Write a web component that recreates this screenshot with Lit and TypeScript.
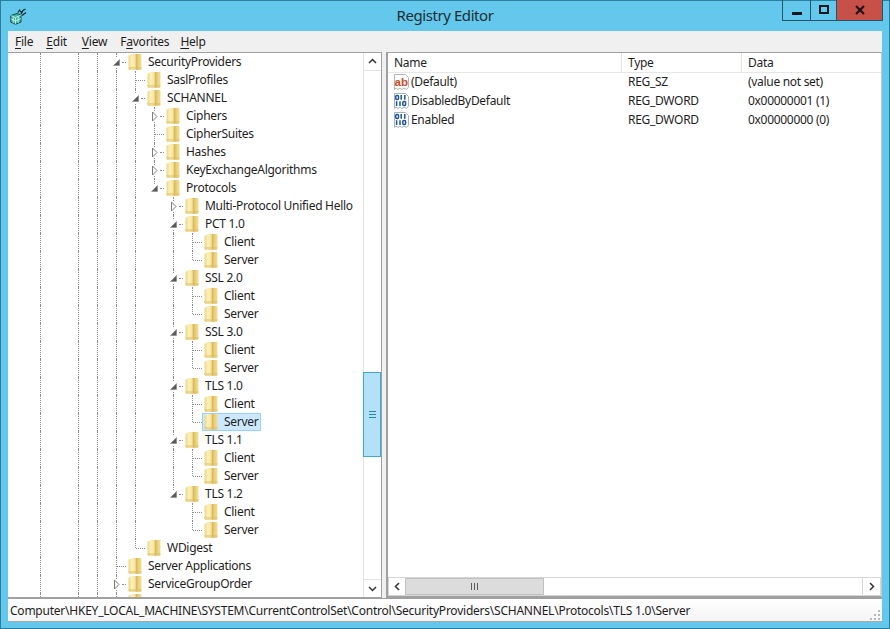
import { LitElement, html, css, svg } from "lit";
import { customElement } from "lit/decorators.js";

type Node = { n: string; open?: boolean; more?: boolean; sel?: boolean; kids?: Node[] };
const pair = (sel = false): Node[] => [{ n: "Client" }, { n: "Server", sel }];
const ver = (n: string, sel = false): Node => ({ n, open: true, kids: pair(sel) });

const roots: Node[] = [
  {
    n: "SecurityProviders", open: true, kids: [
      { n: "SaslProfiles" },
      {
        n: "SCHANNEL", open: true, kids: [
          { n: "Ciphers", more: true },
          { n: "CipherSuites" },
          { n: "Hashes", more: true },
          { n: "KeyExchangeAlgorithms", more: true },
          {
            n: "Protocols", open: true, kids: [
              { n: "Multi-Protocol Unified Hello", more: true },
              ver("PCT 1.0"), ver("SSL 2.0"), ver("SSL 3.0"),
              ver("TLS 1.0", true), ver("TLS 1.1"), ver("TLS 1.2"),
            ],
          },
        ],
      },
      { n: "WDigest" },
    ],
  },
  { n: "Server Applications" },
  { n: "ServiceGroupOrder", more: true },
  { n: "", more: false },
];

type Row = { node: Node; guides: boolean[]; last: boolean };
function flatten(list: Node[], guides: boolean[], out: Row[], openEnd = false) {
  list.forEach((node, i) => {
    const last = i === list.length - 1 && !openEnd;
    out.push({ node, guides, last });
    if (node.kids) flatten(node.kids, [...guides, !last], out);
  });
  return out;
}
const rows = flatten(roots, [false, true, false, true, true], [], true);

const values = [
  { name: "(Default)", type: "REG_SZ", data: "(value not set)", kind: "sz" },
  { name: "DisabledByDefault", type: "REG_DWORD", data: "0x00000001 (1)", kind: "bin" },
  { name: "Enabled", type: "REG_DWORD", data: "0x00000000 (0)", kind: "bin" },
];

const folder = html`<svg class="folder" width="14" height="18" viewBox="0 0 14 18">
  <defs>
    <linearGradient id="fg" x1="0" x2="1" y1="0" y2="0">
      <stop offset="0" stop-color="#ecd582"/><stop offset=".25" stop-color="#fbf1bb"/>
      <stop offset=".5" stop-color="#f7e59c"/><stop offset=".62" stop-color="#d8b85e"/>
      <stop offset=".74" stop-color="#eacd74"/><stop offset="1" stop-color="#f3df92"/>
    </linearGradient>
  </defs>
  <path d="M.5 2.8 L4 1 H13 L13.5 1.8 V15.8 L13 16.8 H1.2 L.5 15.8 Z" fill="url(#fg)"/>
  <path d="M.5 14 H13.5 V15.8 L13 16.8 H1.2 L.5 15.8 Z" fill="#d9bb62" opacity=".45"/>
</svg>`;

const openArrow = html`<svg class="arr" width="9" height="9" viewBox="0 0 9 9"><path d="M7.5 1.5 V7.5 H1.5 Z" fill="#5a5a5a" stroke="#8a8a8a" stroke-width=".6"/></svg>`;
const closedArrow = html`<svg class="arr" width="9" height="11" viewBox="0 0 9 11"><path d="M2.5 1 L7 5.5 L2.5 10 Z" fill="#fff" stroke="#7d7d7d"/></svg>`;

const page = (c: string) => svg`<path d="M1.5 .5 H12.5 L15.5 3.5 V13 L13.5 15.5 L11 14 L9 15.5 L7 14 L5 15.5 L3 14 L1.5 15.5 Z" fill="#fff" stroke="${c}"/>`;
const szIcon = html`<svg class="vi" width="17" height="17" viewBox="0 0 17 17">${page("#b9b3ad")}
  <text x="1.6" y="11.5" font-family="Liberation Sans, sans-serif" font-weight="700" font-size="11.5" letter-spacing="0" fill="#c9482a">ab</text></svg>`;
const binIcon = html`<svg class="vi" width="17" height="17" viewBox="0 0 17 17">${page("#9fb2ca")}
  <g fill="none" stroke="#1f5596" stroke-width="1.5">
    <rect x="2.7" y="2.4" width="2.8" height="4" rx="1"/><path d="M8.2 2 V6.8 M11.8 2 V6.8"/>
    <path d="M3.6 8.2 V13"/><path d="M7 8.2 V13"/><rect x="9.8" y="8.6" width="2.8" height="4" rx="1"/>
  </g></svg>`;

const appIcon = html`<svg width="17" height="17" viewBox="0 0 17 17">
  <path d="M.8 7.5 L7 5.5 L11 7 V14 L5.5 16.3 L.8 14.2 Z" fill="#37b7a6" stroke="#123a40" stroke-width=".9"/>
  <path d="M.8 7.5 L5.5 9.6 L11 7 M5.5 9.6 V16.3 M3.2 8.6 V15.3 M8.2 8.3 V15 M.8 10.8 L5.5 13 L11 10.6" fill="none" stroke="#d7f2ec" stroke-width=".8"/>
  <g stroke="#10262c" stroke-width="1.3" fill="none">
    <path d="M8 4.5 L10 1.5"/><path d="M11 6 L13 2.5 L15.5 1"/><path d="M12 7.5 L16 4.5"/><path d="M10 3 L12 4.5"/>
  </g>
</svg>`;

const chev = (d: string) => html`<svg width="9" height="9" viewBox="0 0 9 9"><path d="${d}" fill="none" stroke="#333" stroke-width="1.5"/></svg>`;

@customElement("app-root")
export class AppRoot extends LitElement {
  static styles = css`
    :host { display: block; width: 890px; height: 629px; overflow: hidden; font-family: "Noto Sans", "Open Sans", sans-serif; font-size: 12px; letter-spacing: -.23px; color: #1e1e1e; }
    * { box-sizing: border-box; }
    .win { width: 890px; height: 629px; background: #63c8ec; border: 1px solid #2a7f9f; display: flex; flex-direction: column; padding: 0 7px 6px; }
    .title { height: 30px; flex: none; display: grid; grid-template-columns: 1fr auto 1fr; align-items: start; }
    .appicon { margin: 7px 0 0 2px; display: block; }
    .title h1 { margin: 5px 0 0; font: 400 15px/18px "Noto Sans", sans-serif; color: #1f2d33; letter-spacing: -.42px; }
    .ctrls { justify-self: end; display: flex; height: 21px; margin-right: -1px; margin-top: -1px; border: 1px solid #24566a; border-top: none; }
    .ctrls div { display: flex; align-items: center; justify-content: center; height: 20px; }
    .min { width: 28px; border-right: 1px solid #24566a; }
    .max { width: 26px; border-right: 1px solid #24566a; }
    .close { width: 45px; background: #c75048; }
    .menu { height: 21px; flex: none; background: #f0f0f0; display: flex; align-items: center; padding-left: 7px; }
    .menu span.m { padding: 0 6px 1px 0; margin-right: 7px; }
    .menu span.m:nth-child(2) { margin-right: 9px; }
    .menu span.m:nth-child(4) { margin-right: 5px; }
    .menu u { text-decoration: underline; text-underline-offset: 2px; }
    .panes { flex: 1; display: flex; min-height: 0; background: #f0f0f0; }
    .tree { width: 374px; flex: none; background: #fff; border-top: 1px solid #a0a0a0; border-right: 1px solid #a0a0a0; border-bottom: 1px solid #a0a0a0; display: flex; min-height: 0; }
    .tree-scroll { flex: 1; overflow: hidden; padding-left: 4px; min-width: 0; letter-spacing: -.28px; }
    .row { display: flex; height: 18px; align-items: stretch; white-space: nowrap; }
    .cell { width: 19px; flex: none; position: relative; display: flex; align-items: center; justify-content: center; }
    .cell.v::before, .cell.up::before { content: ""; position: absolute; left: 9px; top: 0; bottom: 0; border-left: 1px dotted #8c8c8c; }
    .cell.up::before { bottom: 9px; }
    .cell.h::after { content: ""; position: absolute; left: 10px; right: 0; top: 9px; border-top: 1px dotted #8c8c8c; }
    .cell.exp::after { left: 15px; }
    .arr { position: relative; z-index: 1; background: #fff; margin-left: -1px; }
    .item { display: flex; align-items: center; border: 1px solid transparent; padding: 0 2px 0 1px; height: 18px; }
    .item.sel { background: #cce8ff; border-color: #99d1ff; }
    .item span { padding-bottom: 2px; }
    .folder { flex: none; margin-right: 6px; display: block; }
    .vscroll { width: 18px; flex: none; display: flex; flex-direction: column; border-left: 1px solid #e3e3e3; background: #fff; }
    .sbtn { flex: none; display: flex; align-items: center; justify-content: center; }
    .vscroll .sbtn { height: 18px; }
    .vscroll .up { border-bottom: 1px solid #e3e3e3; }
    .vscroll .dn { border-top: 1px solid #e3e3e3; }
    .vtrack { flex: 1; display: flex; flex-direction: column; padding-top: 301px; }
    .vthumb { height: 85px; margin-left: -1px; background: #b3e1f7; border: 1px solid #3fa9d4; display: flex; flex-direction: column; align-items: center; justify-content: center; gap: 1px; }
    .vthumb i { width: 7px; height: 1px; background: #1f87b8; margin: .5px 0; display: block; }
    .split { width: 4px; flex: none; }
    .list { flex: 1; background: #fff; border-top: 1px solid #a0a0a0; border-left: 2px solid #a0a0a0; border-bottom: 2px solid #a0a0a0; border-right: 1px solid #c8c8c8; display: flex; flex-direction: column; min-height: 0; min-width: 0; letter-spacing: -.3px; }
    .lhead { display: grid; grid-template-columns: 234px 120px 1fr; height: 20px; flex: none; border-bottom: 1px solid #e6e6e6; }
    .lhead div { padding: 1px 0 0 6px; border-right: 1px solid #e3e3e3; line-height: 18px; }
    .lhead div:last-child { border-right: none; }
    .lbody { flex: 1; min-height: 0; }
    .lrow { display: grid; grid-template-columns: 234px 120px 1fr; height: 19px; align-items: center; }
    .lname { display: flex; align-items: center; padding-left: 5px; }
    .lname span, .lcell { padding-bottom: 2px; }
    .vi { flex: none; margin-right: 1px; display: block; }
    .lcell { padding-left: 6px; }
    .hscroll { height: 19px; flex: none; display: flex; border: 1px solid #d6d6d6; }
    .hscroll .sbtn { width: 16px; }
    .hthumb { width: 139px; background: #dcdcdc; border: 1px solid #c0c0c0; display: flex; gap: 2px; align-items: center; justify-content: center; }
    .hthumb i { width: 1px; height: 7px; background: #5c5c5c; display: block; }
    .htrack { flex: 1; }
    .hscroll .rt { width: 18px; border-left: 1px solid #d6d6d6; }
    .status { height: 24px; flex: none; background: linear-gradient(#ffffff, #f4f4f4); border-top: 1px solid #a0a0a0; border-bottom: 1px solid #a8a8a8; display: flex; align-items: center; justify-content: space-between; padding: 0 1px 0 2px; }
    .grip { align-self: flex-end; display: block; }
  `;

  renderRow(r: Row) {
    const { node, guides, last } = r;
    const exp = node.open ? openArrow : node.more ? closedArrow : null;
    return html`<div class="row">
      ${guides.map((g) => html`<span class="cell ${g ? "v" : ""}"></span>`)}
      <span class="cell h ${exp ? "exp" : ""} ${last ? "up" : "v"}">${exp}</span>
      <span class="item ${node.sel ? "sel" : ""}">${folder}<span>${node.n}</span></span>
    </div>`;
  }

  render() {
    return html`<div class="win">
      <div class="title">
        <div class="appicon">${appIcon}</div>
        <h1>Registry Editor</h1>
        <div class="ctrls">
          <div class="min"><svg width="12" height="12" viewBox="0 0 12 12"><rect x="1" y="8" width="10" height="3" fill="#0f1a20"/></svg></div>
          <div class="max"><svg width="12" height="12" viewBox="0 0 12 12"><rect x="2" y="2" width="8" height="7" fill="none" stroke="#0f1a20" stroke-width="2"/></svg></div>
          <div class="close"><svg width="12" height="12" viewBox="0 0 12 12"><path d="M2 2 L10 10 M10 2 L2 10" stroke="#1c1414" stroke-width="2.2"/></svg></div>
        </div>
      </div>
      <div class="menu">
        <span class="m"><u>F</u>ile</span>
        <span class="m"><u>E</u>dit</span>
        <span class="m"><u>V</u>iew</span>
        <span class="m">F<u>a</u>vorites</span>
        <span class="m"><u>H</u>elp</span>
      </div>
      <div class="panes">
        <div class="tree">
          <div class="tree-scroll">${rows.map((r) => this.renderRow(r))}</div>
          <div class="vscroll">
            <div class="sbtn up">${chev("M1 6 L4.5 2.5 L8 6")}</div>
            <div class="vtrack"><div class="vthumb"><i></i><i></i><i></i></div></div>
            <div class="sbtn dn">${chev("M1 3 L4.5 6.5 L8 3")}</div>
          </div>
        </div>
        <div class="split"></div>
        <div class="list">
          <div class="lhead"><div>Name</div><div>Type</div><div>Data</div></div>
          <div class="lbody">
            ${values.map((v) => html`<div class="lrow">
              <div class="lname">${v.kind === "sz" ? szIcon : binIcon}<span>${v.name}</span></div>
              <div class="lcell">${v.type}</div>
              <div class="lcell">${v.data}</div>
            </div>`)}
          </div>
          <div class="hscroll">
            <div class="sbtn">${chev("M6 1 L2.5 4.5 L6 8")}</div>
            <div class="hthumb"><i></i><i></i><i></i></div>
            <div class="htrack"></div>
            <div class="sbtn rt">${chev("M3 1 L6.5 4.5 L3 8")}</div>
          </div>
        </div>
      </div>
      <div class="status">
        <span>Computer\\HKEY_LOCAL_MACHINE\\SYSTEM\\CurrentControlSet\\Control\\SecurityProviders\\SCHANNEL\\Protocols\\TLS 1.0\\Server</span>
        <svg class="grip" width="11" height="11" viewBox="0 0 11 11" fill="#b8b8b8">
          <rect x="8" y="0" width="2" height="2"/><rect x="4" y="4" width="2" height="2"/><rect x="8" y="4" width="2" height="2"/>
          <rect x="0" y="8" width="2" height="2"/><rect x="4" y="8" width="2" height="2"/><rect x="8" y="8" width="2" height="2"/>
        </svg>
      </div>
    </div>`;
  }
}
